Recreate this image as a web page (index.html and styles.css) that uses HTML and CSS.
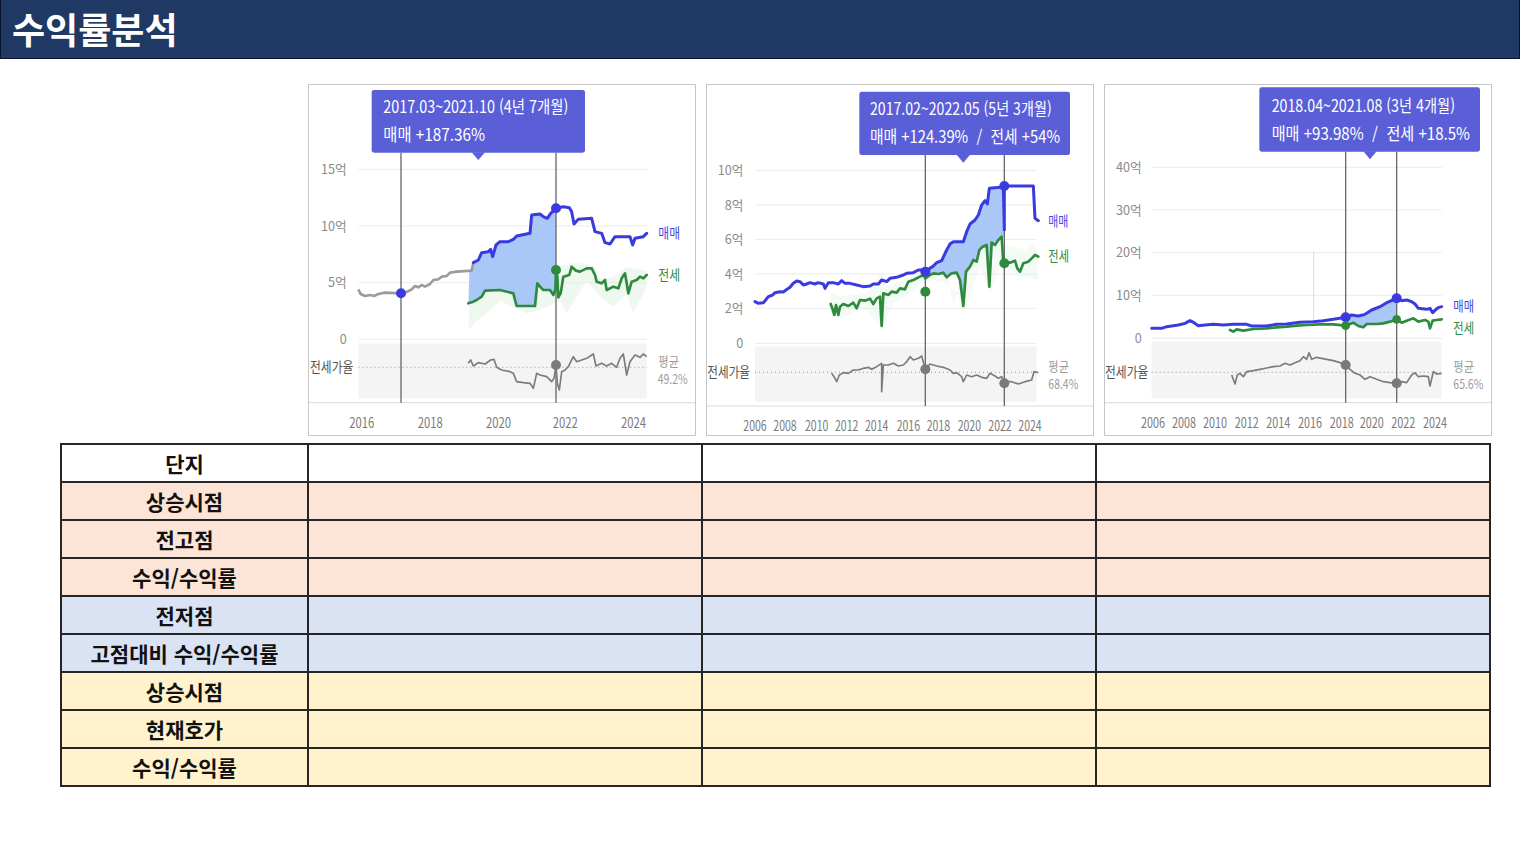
FILE: index.html
```html
<!DOCTYPE html>
<html lang="ko">
<head>
<meta charset="utf-8">
<title>수익률분석</title>
<link rel="stylesheet" href="styles.css">
</head>
<body>
<header class="topbar"><h1 class="title"><span>수익률분석</span></h1></header>
<main class="main">
  <section class="charts">
    <div class="chart">
      <svg viewBox="27 15 1158 1050" width="386" height="350">
        <g class="grid"><line x1="175" y1="268" x2="1040" y2="268"/><line x1="175" y1="438" x2="1040" y2="438"/><line x1="175" y1="608" x2="1040" y2="608"/><line x1="175" y1="778" x2="1040" y2="778"/></g>
        <g class="ylab"><text x="140" y="282">15억</text><text x="140" y="452">10억</text><text x="140" y="622">5억</text><text x="140" y="792">0</text></g>
        <rect class="rbg" x="175" y="790" width="865" height="165"/>
        <line class="dots" x1="175" y1="862" x2="1040" y2="862"/>
        <text class="rlab" x="30" y="876" textLength="130" lengthAdjust="spacingAndGlyphs">전세가율</text>
        <text class="avg" x="1075" y="858" textLength="62" lengthAdjust="spacingAndGlyphs">평균</text>
        <text class="avg" x="1073" y="912" textLength="90" lengthAdjust="spacingAndGlyphs">49.2%</text>
        <line class="axis" x1="0" y1="968" x2="1200" y2="968"/>
        <g class="yr"><text x="148" y="1044" textLength="75" lengthAdjust="spacingAndGlyphs">2016</text><text x="353" y="1044" textLength="75" lengthAdjust="spacingAndGlyphs">2018</text><text x="558" y="1044" textLength="75" lengthAdjust="spacingAndGlyphs">2020</text><text x="758" y="1044" textLength="75" lengthAdjust="spacingAndGlyphs">2022</text><text x="963" y="1044" textLength="75" lengthAdjust="spacingAndGlyphs">2024</text></g>
        <path class="band" d="M505,750 L510,660 L530,640 L560,615 L600,612 L640,505 L655,610 L700,600 L715,560 L740,600 L770,560 L790,555 L830,548 L880,555 L900,598 L940,590 L980,562 L1040,572 L1040,622 L1000,700 L980,642 L940,680 L900,650 L860,602 L800,700 L780,662 L720,690 L680,700 L640,682 L600,662 L560,700 L530,722 Z"/>
        <path class="gap" d="M508,572 L520,548 L535,540 L545,518 L565,515 L572,508 L578,530 L588,495 L600,485 L625,485 L640,478 L650,468 L690,460 L695,405 L720,402 L730,410 L742,415 L752,400 L768,385 L768,572 L766,630 L760,645 L750,630 L730,630 L720,620 L712,610 L705,678 L650,678 L645,660 L640,640 L600,630 L555,632 L545,650 L530,660 L520,665 L505,670 Z"/>
        <line class="vline" x1="303" y1="218" x2="303" y2="968"/>
        <line class="vline" x1="768" y1="218" x2="768" y2="968"/>
        <path class="old" d="M175,628 L182,642 L195,648 L210,645 L222,648 L235,642 L255,638 L300,640 L320,636 L335,628 L345,618 L355,622 L365,615 L375,620 L390,612 L400,600 L415,598 L425,590 L440,588 L450,578 L470,575 L515,572 L520,548"/>
        <path class="price" d="M520,548 L535,540 L545,518 L565,515 L572,508 L578,530 L588,495 L600,485 L625,485 L640,478 L650,468 L690,460 L695,405 L720,402 L730,410 L742,415 L752,400 L768,385 L790,380 L808,383 L815,395 L822,432 L835,418 L875,415 L885,455 L905,460 L915,488 L930,492 L945,470 L990,470 L998,495 L1005,475 L1030,470 L1040,460"/>
        <path class="jeonse" d="M505,670 L520,665 L530,660 L545,650 L555,632 L600,630 L640,640 L645,660 L650,678 L705,678 L712,610 L720,620 L730,630 L750,630 L760,645 L766,630 L768,572 L772,590 L775,652 L782,640 L790,590 L808,585 L815,560 L828,572 L840,575 L860,565 L875,565 L885,585 L890,605 L905,610 L915,600 L920,630 L940,620 L955,625 L965,595 L975,580 L985,640 L995,605 L1010,600 L1020,590 L1030,595 L1040,585"/>
        <path class="ratio" d="M505,850 L512,840 L520,858 L535,848 L555,852 L572,840 L582,838 L590,862 L605,870 L630,875 L640,880 L650,905 L670,908 L690,910 L700,925 L710,880 L720,885 L740,890 L755,905 L762,895 L768,855 L772,910 L778,930 L785,875 L795,870 L805,860 L820,830 L830,845 L845,840 L860,835 L880,822 L888,858 L905,850 L920,858 L935,850 L950,862 L960,835 L970,822 L980,885 L990,845 L1005,825 L1020,832 L1030,822 L1040,830"/>
        <circle class="dot-b" cx="303" cy="640" r="15"/><circle class="dot-b" cx="768" cy="385" r="15"/><circle class="dot-g" cx="768" cy="570" r="15"/><circle class="dot-k" cx="768" cy="855" r="15"/>
        <text class="lg-b" x="1075" y="475" textLength="65" lengthAdjust="spacingAndGlyphs">매매</text>
        <text class="lg-g" x="1075" y="600" textLength="65" lengthAdjust="spacingAndGlyphs">전세</text>
        <rect class="tip" x="215" y="30" width="640" height="188" rx="7"/>
        <path class="tip" d="M515,217 L555,217 L535,240 Z"/>
        <text class="tiptxt" x="250" y="100" textLength="555" lengthAdjust="spacingAndGlyphs">2017.03~2021.10 (4년 7개월)</text>
        <text class="tiptxt" x="250" y="182" textLength="305" lengthAdjust="spacingAndGlyphs">매매 +187.36%</text>
      </svg>
    </div>
    <div class="chart">
      <svg viewBox="21 15 1158 1050" width="386" height="350">
        <g class="grid"><line x1="165" y1="272" x2="1010" y2="272"/><line x1="165" y1="375" x2="1010" y2="375"/><line x1="165" y1="478" x2="1010" y2="478"/><line x1="165" y1="582" x2="1010" y2="582"/><line x1="165" y1="685" x2="1010" y2="685"/><line x1="165" y1="790" x2="1010" y2="790"/></g>
        <g class="ylab"><text x="130" y="286">10억</text><text x="130" y="389">8억</text><text x="130" y="492">6억</text><text x="130" y="596">4억</text><text x="130" y="699">2억</text><text x="130" y="804">0</text></g>
        <rect class="rbg" x="165" y="800" width="845" height="165"/>
        <line class="dots" x1="165" y1="877" x2="1010" y2="877"/>
        <text class="rlab" x="22" y="891" textLength="128" lengthAdjust="spacingAndGlyphs">전세가율</text>
        <text class="avg" x="1045" y="872" textLength="62" lengthAdjust="spacingAndGlyphs">평균</text>
        <text class="avg" x="1045" y="926" textLength="90" lengthAdjust="spacingAndGlyphs">68.4%</text>
        <line class="axis" x1="0" y1="978" x2="1200" y2="978"/>
        <g class="yr"><text x="130" y="1053" textLength="70" lengthAdjust="spacingAndGlyphs">2006</text><text x="220" y="1053" textLength="70" lengthAdjust="spacingAndGlyphs">2008</text><text x="315" y="1053" textLength="70" lengthAdjust="spacingAndGlyphs">2010</text><text x="405" y="1053" textLength="70" lengthAdjust="spacingAndGlyphs">2012</text><text x="495" y="1053" textLength="70" lengthAdjust="spacingAndGlyphs">2014</text><text x="590" y="1053" textLength="70" lengthAdjust="spacingAndGlyphs">2016</text><text x="680" y="1053" textLength="70" lengthAdjust="spacingAndGlyphs">2018</text><text x="773" y="1053" textLength="70" lengthAdjust="spacingAndGlyphs">2020</text><text x="865" y="1053" textLength="70" lengthAdjust="spacingAndGlyphs">2022</text><text x="955" y="1053" textLength="70" lengthAdjust="spacingAndGlyphs">2024</text></g>
        <path class="band faint" d="M392,640 L420,650 L460,645 L500,640 L545,575 L560,620 L620,600 L660,575 L700,565 L740,570 L760,680 L790,560 L840,495 L880,470 L930,500 L980,510 L1000,490 L1015,520 L1015,600 L990,590 L960,590 L930,570 L900,560 L870,640 L840,560 L810,650 L790,690 L770,640 L740,610 L700,600 L660,610 L620,650 L580,670 L545,745 L500,690 L460,700 L420,715 L392,700 Z"/>
        <path class="gap" d="M676,575 L690,565 L700,558 L710,548 L725,542 L740,510 L750,492 L760,485 L790,485 L800,455 L810,432 L825,420 L835,405 L845,375 L855,362 L862,372 L868,325 L900,322 L913,322 L913,470 L905,470 L895,480 L885,495 L875,488 L868,620 L860,495 L848,500 L838,510 L830,545 L820,540 L810,560 L798,575 L790,678 L780,600 L770,578 L755,580 L740,592 L730,578 L715,582 L700,580 L690,585 L676,595 Z"/>
        <line class="vline" x1="676" y1="225" x2="676" y2="978"/>
        <line class="vline" x1="913" y1="225" x2="913" y2="978"/>
        <path class="price" d="M165,665 L175,670 L190,668 L197,660 L205,650 L218,645 L225,638 L240,635 L250,636 L258,630 L270,622 L280,610 L290,603 L300,605 L310,615 L320,612 L330,608 L345,612 L355,608 L370,612 L375,625 L385,608 L400,608 L415,612 L425,602 L435,610 L450,610 L470,615 L490,620 L510,618 L520,612 L535,612 L545,600 L560,605 L570,595 L590,592 L610,585 L620,580 L640,578 L655,570 L665,570 L676,575 L690,565 L700,558 L710,548 L725,542 L740,510 L750,492 L760,485 L790,485 L800,455 L810,432 L825,420 L835,405 L845,375 L855,362 L862,372 L868,325 L900,322 L910,322 L913,450 L913,318 L1000,318 L1005,415 L1015,422"/>
        <path class="jeonse" d="M392,672 L398,688 L403,705 L408,675 L415,705 L420,680 L430,672 L445,678 L460,668 L470,685 L480,660 L495,662 L510,656 L520,672 L530,655 L540,650 L545,738 L550,640 L565,645 L575,635 L590,638 L600,625 L615,628 L625,605 L640,600 L660,590 L670,585 L676,595 L690,585 L700,580 L715,582 L730,578 L740,592 L755,580 L770,578 L780,600 L790,678 L798,575 L810,560 L820,540 L830,545 L838,510 L848,500 L860,495 L868,620 L875,488 L885,495 L895,480 L905,470 L910,550 L920,545 L930,548 L945,542 L952,565 L960,575 L970,550 L985,545 L995,535 L1005,525 L1015,530"/>
        <path class="ratio" d="M395,880 L402,890 L410,905 L418,885 L430,878 L445,880 L460,870 L475,870 L490,865 L505,862 L515,868 L530,860 L545,850 L545,935 L550,855 L565,855 L580,850 L595,858 L610,855 L620,845 L630,830 L640,840 L655,835 L665,828 L676,868 L690,852 L710,858 L730,862 L750,870 L760,880 L770,878 L785,890 L790,905 L800,885 L815,890 L830,885 L845,892 L860,895 L870,880 L885,888 L895,895 L905,890 L913,910 L920,905 L935,905 L955,912 L975,905 L995,900 L1002,875 L1015,878"/>
        <circle class="dot-b" cx="676" cy="575" r="15"/><circle class="dot-b" cx="913" cy="318" r="15"/><circle class="dot-g" cx="676" cy="635" r="15"/><circle class="dot-g" cx="913" cy="550" r="15"/><circle class="dot-k" cx="676" cy="868" r="15"/><circle class="dot-k" cx="913" cy="910" r="15"/>
        <text class="lg-b" x="1045" y="438" textLength="60" lengthAdjust="spacingAndGlyphs">매매</text>
        <text class="lg-g" x="1045" y="543" textLength="62" lengthAdjust="spacingAndGlyphs">전세</text>
        <rect class="tip" x="478" y="35" width="632" height="190" rx="7"/>
        <path class="tip" d="M770,224 L810,224 L790,248 Z"/>
        <text class="tiptxt" x="510" y="105" textLength="545" lengthAdjust="spacingAndGlyphs">2017.02~2022.05 (5년 3개월)</text>
        <text class="tiptxt" x="510" y="190" textLength="570" lengthAdjust="spacingAndGlyphs">매매 +124.39% &#160;/&#160; 전세 +54%</text>
      </svg>
    </div>
    <div class="chart">
      <svg viewBox="15 15 1158 1050" width="386" height="350">
        <g class="grid"><line x1="155" y1="262" x2="1025" y2="262"/><line x1="155" y1="390" x2="1025" y2="390"/><line x1="155" y1="518" x2="1025" y2="518"/><line x1="155" y1="646" x2="1025" y2="646"/><line x1="155" y1="775" x2="1025" y2="775"/></g>
        <g class="ylab"><text x="125" y="276">40억</text><text x="125" y="404">30억</text><text x="125" y="532">20억</text><text x="125" y="660">10억</text><text x="125" y="789">0</text></g>
        <rect class="rbg" x="155" y="785" width="870" height="170"/>
        <line class="dots" x1="155" y1="877" x2="1025" y2="877"/>
        <text class="rlab" x="15" y="891" textLength="130" lengthAdjust="spacingAndGlyphs">전세가율</text>
        <text class="avg" x="1060" y="872" textLength="62" lengthAdjust="spacingAndGlyphs">평균</text>
        <text class="avg" x="1060" y="926" textLength="90" lengthAdjust="spacingAndGlyphs">65.6%</text>
        <line class="axis" x1="0" y1="968" x2="1200" y2="968"/>
        <g class="yr"><text x="123" y="1043" textLength="72" lengthAdjust="spacingAndGlyphs">2006</text><text x="216" y="1043" textLength="72" lengthAdjust="spacingAndGlyphs">2008</text><text x="309" y="1043" textLength="72" lengthAdjust="spacingAndGlyphs">2010</text><text x="404" y="1043" textLength="72" lengthAdjust="spacingAndGlyphs">2012</text><text x="499" y="1043" textLength="72" lengthAdjust="spacingAndGlyphs">2014</text><text x="594" y="1043" textLength="72" lengthAdjust="spacingAndGlyphs">2016</text><text x="689" y="1043" textLength="72" lengthAdjust="spacingAndGlyphs">2018</text><text x="779" y="1043" textLength="72" lengthAdjust="spacingAndGlyphs">2020</text><text x="874" y="1043" textLength="72" lengthAdjust="spacingAndGlyphs">2022</text><text x="969" y="1043" textLength="72" lengthAdjust="spacingAndGlyphs">2024</text></g>
        <line class="spike" x1="641" y1="515" x2="641" y2="725"/>
        <path class="gap" d="M737,712 L755,705 L775,708 L795,703 L815,690 L840,680 L860,668 L890,655 L890,718 L870,725 L850,730 L830,732 L800,732 L790,742 L775,738 L760,728 L737,737 Z"/>
        <line class="vline" x1="737" y1="215" x2="737" y2="968"/>
        <line class="vline" x1="890" y1="215" x2="890" y2="968"/>
        <path class="price" d="M155,745 L185,745 L200,740 L215,738 L235,735 L255,730 L270,722 L282,728 L295,737 L315,735 L340,733 L370,735 L400,733 L440,733 L455,738 L500,738 L530,733 L560,732 L600,727 L640,725 L670,722 L700,718 L737,712 L755,705 L775,708 L795,703 L815,690 L840,680 L860,668 L890,655 L905,662 L920,660 L935,665 L945,672 L955,685 L980,688 L990,685 L998,698 L1008,688 L1015,683 L1025,680"/>
        <path class="jeonse" d="M390,750 L400,755 L410,748 L430,752 L460,747 L500,745 L530,742 L560,740 L590,737 L620,735 L660,733 L700,733 L737,737 L760,728 L775,738 L790,742 L800,732 L830,732 L850,730 L870,725 L890,718 L905,728 L920,722 L940,715 L955,725 L975,720 L985,725 L990,745 L998,722 L1010,720 L1025,718"/>
        <path class="ratio" d="M395,885 L405,912 L412,885 L420,880 L430,890 L440,875 L460,872 L480,868 L500,864 L520,860 L540,858 L555,850 L570,855 L585,848 L600,842 L610,830 L620,838 L627,818 L635,838 L650,832 L665,835 L680,838 L700,842 L720,848 L737,855 L750,868 L765,880 L780,885 L795,898 L810,890 L830,898 L850,905 L870,908 L890,910 L905,905 L920,908 L935,885 L945,878 L955,890 L970,888 L985,890 L990,918 L1000,875 L1010,882 L1025,880"/>
        <circle class="dot-b" cx="737" cy="712" r="15"/><circle class="dot-b" cx="890" cy="655" r="15"/><circle class="dot-g" cx="737" cy="737" r="13"/><circle class="dot-g" cx="890" cy="718" r="13"/><circle class="dot-k" cx="737" cy="855" r="15"/><circle class="dot-k" cx="890" cy="910" r="15"/>
        <text class="lg-b" x="1060" y="694" textLength="62" lengthAdjust="spacingAndGlyphs">매매</text>
        <text class="lg-g" x="1060" y="759" textLength="62" lengthAdjust="spacingAndGlyphs">전세</text>
        <rect class="tip" x="478" y="22" width="662" height="193" rx="7"/>
        <path class="tip" d="M790,214 L830,214 L810,238 Z"/>
        <text class="tiptxt" x="515" y="95" textLength="550" lengthAdjust="spacingAndGlyphs">2018.04~2021.08 (3년 4개월)</text>
        <text class="tiptxt" x="515" y="180" textLength="595" lengthAdjust="spacingAndGlyphs">매매 +93.98% &#160;/&#160; 전세 +18.5%</text>
      </svg>
    </div>
  </section>
  <table class="grid-table">
    <colgroup><col class="c-head"><col class="c-val"><col class="c-val"><col class="c-val"></colgroup>
    <tbody>
      <tr class="r-white"><th>단지</th><td></td><td></td><td></td></tr>
      <tr class="r-peach"><th>상승시점</th><td></td><td></td><td></td></tr>
      <tr class="r-peach"><th>전고점</th><td></td><td></td><td></td></tr>
      <tr class="r-peach"><th>수익/수익률</th><td></td><td></td><td></td></tr>
      <tr class="r-blue"><th>전저점</th><td></td><td></td><td></td></tr>
      <tr class="r-blue"><th>고점대비 수익/수익률</th><td></td><td></td><td></td></tr>
      <tr class="r-yellow"><th>상승시점</th><td></td><td></td><td></td></tr>
      <tr class="r-yellow"><th>현재호가</th><td></td><td></td><td></td></tr>
      <tr class="r-yellow"><th>수익/수익률</th><td></td><td></td><td></td></tr>
    </tbody>
  </table>
</main>
</body>
</html>
```

FILE: styles.css
```css
* { box-sizing: border-box; }
html, body { margin: 0; padding: 0; background: #fff; }
body { font-family: "Noto Sans CJK KR", "Noto Sans", sans-serif; color: #111; width: 1520px; height: 855px; overflow: hidden; }

.topbar {
  height: 59px;
  background: #203864;
  border: 1px solid #0b1530;
  border-top: 0;
}
.title {
  margin: 0;
  padding-left: 11px;
  line-height: 57px;
  font-size: 36px;
  font-weight: 700;
  color: #fff;
}
.title span { display: inline-block; }

.main { padding: 25px 0 0 60px; }

.charts { display: flex; gap: 10px; margin-left: 248px; }
.chart {
  width: 388px;
  height: 352px;
  border: 1px solid #c6c6c6;
  background: #fff;
}
.chart svg { display: block; font-family: "Noto Sans CJK KR", sans-serif; }

.grid line { stroke: #ebebeb; stroke-width: 3; }
.axis { stroke: #dadada; stroke-width: 3; }
.rbg { fill: #f4f4f4; }
.dots { stroke: #a8a8a8; stroke-width: 4; stroke-dasharray: 3 9; }
.vline { stroke: #6a6a6a; stroke-width: 4; }
.price { fill: none; stroke: #3a3ae0; stroke-width: 9; stroke-linejoin: round; stroke-linecap: round; }
.jeonse { fill: none; stroke: #2e8b3d; stroke-width: 8; stroke-linejoin: round; stroke-linecap: round; }
.old { fill: none; stroke: #9c9c9c; stroke-width: 8; stroke-linejoin: round; }
.ratio { fill: none; stroke: #7c7c7c; stroke-width: 5; stroke-linejoin: round; }
.gap { fill: #a9c7f7; }
.band { fill: #dcefdc; opacity: 0.45; }
.band.faint { opacity: 0.3; }
.spike { stroke: #cfe8cf; stroke-width: 3; }
.dot-b { fill: #3a3ae0; }
.dot-g { fill: #2e8b3d; }
.dot-k { fill: #7a7a7a; }
.tip { fill: #5a5fd8; }
.tiptxt { fill: #fff; font-size: 50px; }
.ylab text { fill: #8a8a8a; font-size: 38px; text-anchor: end; }
.yr text { fill: #7a7a7a; font-size: 42px; }
.lg-b { fill: #4848e0; font-size: 42px; }
.lg-g { fill: #2e8b3d; font-size: 42px; }
.rlab { fill: #555; font-size: 42px; }
.avg { fill: #9a9a9a; font-size: 38px; }

.grid-table {
  margin-top: 7px;
  width: 1431px;
  border-collapse: collapse;
  table-layout: fixed;
  border: 2px solid #262626;
}
.c-head { width: 247px; }
.c-val { width: 394px; }
.grid-table th, .grid-table td {
  height: 38px;
  padding: 0;
  border: 2px solid #262626;
}
.grid-table th {
  font-size: 21px;
  font-weight: 700;
  text-align: center;
  color: #111;
  white-space: nowrap;
}
.r-white { background: #fff; }
.r-peach { background: #fce4d6; }
.r-blue { background: #dae3f3; }
.r-yellow { background: #fff2cc; }
```
